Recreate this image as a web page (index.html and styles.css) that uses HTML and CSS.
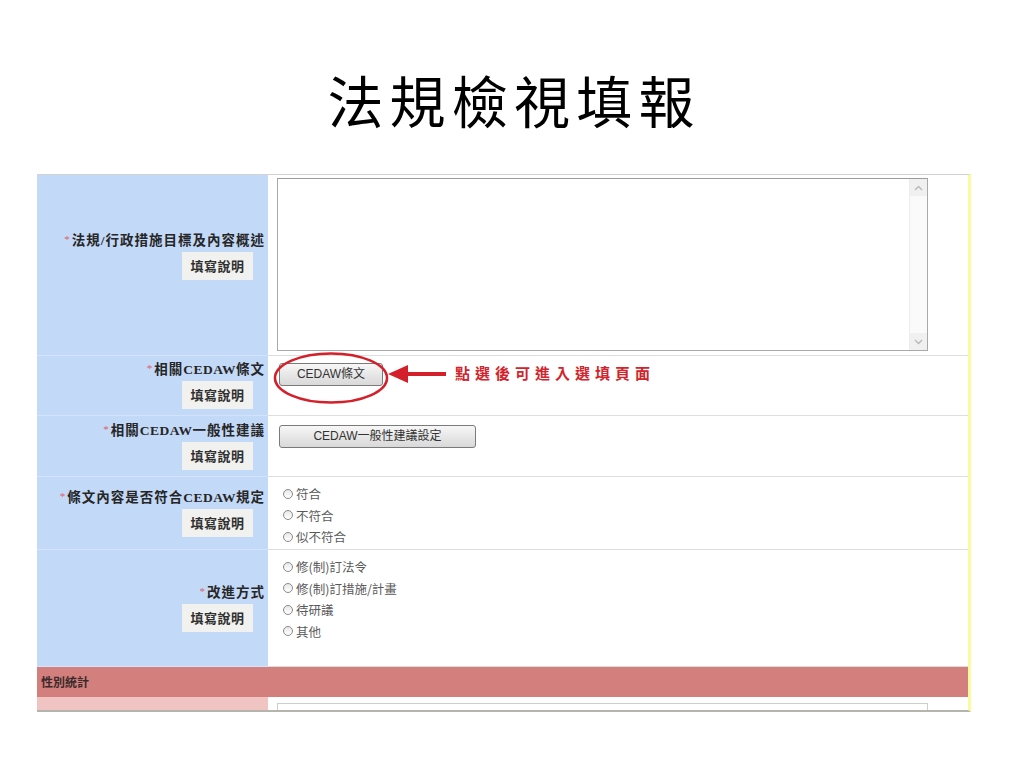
FILE: index.html
```html
<!DOCTYPE html>
<html lang="zh-Hant">
<head>
<meta charset="utf-8">
<title>法規檢視填報</title>
<link rel="stylesheet" href="styles.css">
</head>
<body>
<div class="page">
  <h1 class="title">法規檢視填報</h1>
  <div class="form">
    <div class="lab r1">
      <div class="label"><span class="req">*</span>法規/行政措施目標及內容概述</div>
      <div class="help">填寫說明</div>
    </div>
    <div class="val r1v">
      <div class="textarea">
        <div class="sb">
          <div class="sb-btn">
            <svg width="9" height="6" viewBox="0 0 9 6"><path d="M1 5 L4.5 1.5 L8 5" fill="none" stroke="#b8b8b8" stroke-width="1.3"/></svg>
          </div>
          <div class="sb-track"></div>
          <div class="sb-btn">
            <svg width="9" height="6" viewBox="0 0 9 6"><path d="M1 1 L4.5 4.5 L8 1" fill="none" stroke="#b8b8b8" stroke-width="1.3"/></svg>
          </div>
        </div>
      </div>
    </div>

    <div class="lab">
      <div class="label"><span class="req">*</span>相關<span class="lat">CEDAW</span>條文</div>
      <div class="help">填寫說明</div>
    </div>
    <div class="val r2v">
      <div class="btn b1">CEDAW條文</div>
    </div>

    <div class="lab">
      <div class="label"><span class="req">*</span>相關<span class="lat">CEDAW</span>一般性建議</div>
      <div class="help">填寫說明</div>
    </div>
    <div class="val r3v">
      <div class="btn b2">CEDAW一般性建議設定</div>
    </div>

    <div class="lab">
      <div class="label"><span class="req">*</span>條文內容是否符合<span class="lat">CEDAW</span>規定</div>
      <div class="help">填寫說明</div>
    </div>
    <div class="val rv">
      <div class="radio"><span class="dot"></span>符合</div>
      <div class="radio"><span class="dot"></span>不符合</div>
      <div class="radio"><span class="dot"></span>似不符合</div>
    </div>

    <div class="lab">
      <div class="label"><span class="req">*</span>改進方式</div>
      <div class="help">填寫說明</div>
    </div>
    <div class="val rv">
      <div class="radio"><span class="dot"></span>修(制)訂法令</div>
      <div class="radio"><span class="dot"></span>修(制)訂措施/計畫</div>
      <div class="radio"><span class="dot"></span>待研議</div>
      <div class="radio"><span class="dot"></span>其他</div>
    </div>

    <div class="section">性別統計</div>

    <div class="lab pink"></div>
    <div class="val last"><div class="textarea2"></div></div>
  </div>

  <svg class="annot" width="200" height="70" viewBox="0 0 200 70">
    <ellipse cx="59" cy="26" rx="56" ry="24.5" fill="none" stroke="#d3202a" stroke-width="2.6"/>
    <path d="M116 22 L136 13 L136 31 Z" fill="#d3202a"/>
    <rect x="134" y="20" width="40" height="4" fill="#d3202a"/>
  </svg>
  <div class="annot-text">點選後可進入選填頁面</div>
</div>
</body>
</html>
```

FILE: styles.css
```css
html, body {
  margin: 0;
  padding: 0;
  background: #ffffff;
}

.page {
  position: relative;
  width: 1024px;
  height: 768px;
  overflow: hidden;
  font-family: "Noto Sans CJK TC", sans-serif;
}

.title {
  margin: 69px 0 0 0;
  height: 60px;
  line-height: 60px;
  font-size: 56px;
  font-weight: 400;
  letter-spacing: 6.2px;
  text-align: center;
  color: #000;
  padding-left: 4px;
}

.form {
  margin: 45px 0 0 37px;
  width: 934px;
  box-sizing: border-box;
  border-top: 1px solid #d2d2d2;
  border-right: 3px solid #fbfb9e;
  border-bottom: 2px solid #b5b5ad;
  display: grid;
  grid-template-columns: 231px 700px;
  grid-template-rows: 181px 60px 61px 73px 117px 30px 13px;
}

.lab {
  background: #c3d9f8;
  border-bottom: 1px solid #d4e3f9;
  box-sizing: border-box;
  display: flex;
  flex-direction: column;
  align-items: flex-end;
  justify-content: center;
  padding-right: 3px;
  gap: 3px;
}

.lab.r1 {
  padding-bottom: 18px;
}

.label {
  font-family: "Liberation Serif", "Noto Sans CJK TC", serif;
  font-size: 13.5px;
  font-weight: 700;
  letter-spacing: 1px;
  line-height: 16px;
  color: #262626;
  white-space: nowrap;
}

.lat {
  letter-spacing: 0.5px;
}

.req {
  color: #e0606a;
  font-size: 11px;
  font-weight: 400;
  margin-right: 1px;
  position: relative;
  top: -2px;
}

.help {
  width: 71px;
  height: 28px;
  margin-right: 12px;
  background: #f1f1ef;
  font-size: 13px;
  font-weight: 700;
  color: #303030;
  text-align: center;
  line-height: 28px;
  letter-spacing: 0.5px;
}

.val {
  background: #ffffff;
  border-bottom: 1px solid #dedede;
  box-sizing: border-box;
  padding-left: 9px;
}

.r1v {
  padding-top: 3px;
}

.textarea {
  width: 651px;
  height: 173px;
  box-sizing: border-box;
  border: 1px solid #a9a9a9;
  border-top-color: #9c9c9c;
  background: #fff;
  display: flex;
  justify-content: flex-end;
}

.sb {
  width: 17px;
  background: #fafafa;
  border-left: 1px solid #ececec;
  display: flex;
  flex-direction: column;
}

.sb-btn {
  height: 17px;
  display: flex;
  align-items: center;
  justify-content: center;
  background: #f0f0f0;
}

.sb-track {
  flex: 1;
}

.r2v {
  padding-top: 7px;
  padding-left: 11px;
}

.r3v {
  padding-top: 9px;
  padding-left: 11px;
}

.btn {
  height: 23px;
  box-sizing: border-box;
  border: 1px solid #7a7a7a;
  border-radius: 3px;
  background: linear-gradient(#f7f7f7, #e4e4e4 60%, #d9d9d9);
  font-family: "Liberation Sans", "Noto Sans CJK TC", sans-serif;
  font-size: 12px;
  color: #333;
  line-height: 21px;
  text-align: center;
}

.b1 {
  width: 104px;
}

.b2 {
  width: 197px;
}

.rv {
  padding-top: 6px;
  padding-left: 15px;
}

.radio {
  height: 21.5px;
  line-height: 21.5px;
  font-size: 12.5px;
  color: #5a5a5a;
  display: flex;
  align-items: center;
}

.dot {
  width: 10px;
  height: 10px;
  box-sizing: border-box;
  border: 1px solid #8a8a8a;
  border-radius: 50%;
  background: linear-gradient(#e8e8e8, #ffffff);
  margin-right: 3px;
}

.section {
  grid-column: 1 / 3;
  background: #d37f7e;
  font-size: 12px;
  font-weight: 700;
  color: #3a2a2a;
  line-height: 30px;
  padding-left: 4px;
}

.lab.pink {
  background: #f1c4c4;
  border-bottom: none;
}

.val.last {
  border-bottom: none;
  padding-top: 6px;
  overflow: hidden;
}

.textarea2 {
  width: 651px;
  height: 20px;
  box-sizing: border-box;
  border: 1px solid #c5d3c8;
}

.annot {
  position: absolute;
  left: 272px;
  top: 352px;
}

.annot-text {
  position: absolute;
  left: 455px;
  top: 365px;
  font-family: "Liberation Serif", "Noto Sans CJK TC", serif;
  font-size: 15px;
  font-weight: 700;
  letter-spacing: 5px;
  line-height: 18px;
  color: #d3232b;
  white-space: nowrap;
}
```
